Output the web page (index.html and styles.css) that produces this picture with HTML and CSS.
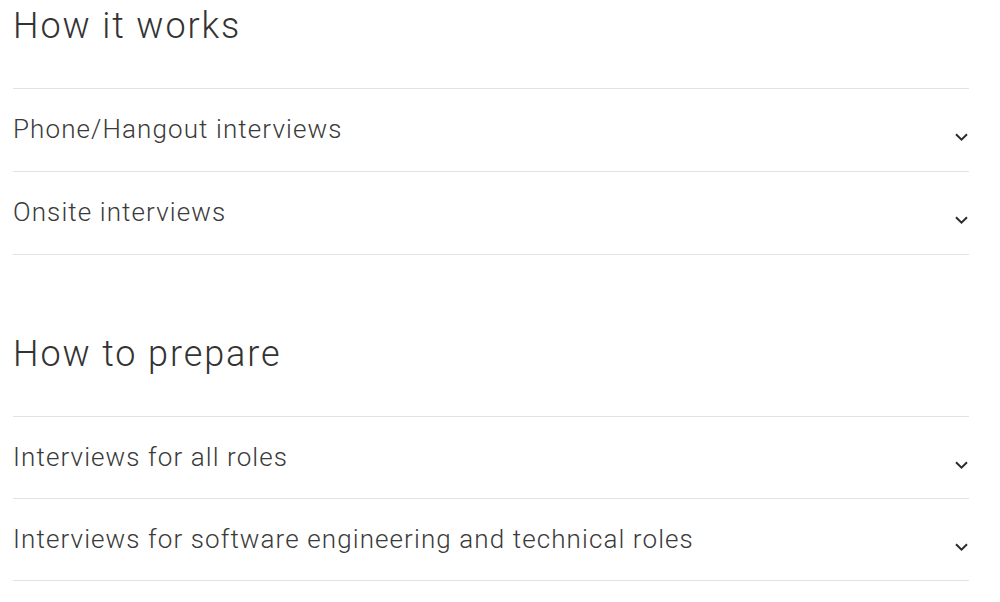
FILE: index.html
```html
<!DOCTYPE html>
<html lang="en">
<head>
<meta charset="utf-8">
<title>How it works</title>
<link rel="stylesheet" href="styles.css">
</head>
<body>
<main class="page">
  <section class="section">
    <h2 class="section-title">How it works</h2>
    <ul class="accordion">
      <li class="accordion-item">
        <span class="accordion-label">Phone/Hangout interviews</span>
        <svg class="chevron" viewBox="0 0 13 8" aria-hidden="true"><path d="M1 1.2l5.5 5.4 5.5-5.4"/></svg>
      </li>
      <li class="accordion-item">
        <span class="accordion-label">Onsite interviews</span>
        <svg class="chevron" viewBox="0 0 13 8" aria-hidden="true"><path d="M1 1.2l5.5 5.4 5.5-5.4"/></svg>
      </li>
    </ul>
  </section>
  <section class="section section-next">
    <h2 class="section-title">How to prepare</h2>
    <ul class="accordion">
      <li class="accordion-item">
        <span class="accordion-label">Interviews for all roles</span>
        <svg class="chevron" viewBox="0 0 13 8" aria-hidden="true"><path d="M1 1.2l5.5 5.4 5.5-5.4"/></svg>
      </li>
      <li class="accordion-item">
        <span class="accordion-label">Interviews for software engineering and technical roles</span>
        <svg class="chevron" viewBox="0 0 13 8" aria-hidden="true"><path d="M1 1.2l5.5 5.4 5.5-5.4"/></svg>
      </li>
    </ul>
  </section>
</main>
</body>
</html>
```
FILE: styles.css
```css
html, body {
  margin: 0;
  padding: 0;
  background: #ffffff;
}
body {
  font-family: Roboto, "Noto Sans", sans-serif;
  color: #333333;
}
.page {
  width: 956px;
  padding: 2px 0 0 13px;
}
.section-title {
  margin: 0 0 38px;
  font-size: 36px;
  font-weight: 300;
  line-height: 48px;
  letter-spacing: 1.9px;
  color: #333333;
}
.section-next {
  margin-top: 75px;
}
.accordion {
  list-style: none;
  margin: 0;
  padding: 0;
  border-top: 1px solid #e2e2e2;
}
.accordion-item {
  display: flex;
  align-items: flex-start;
  justify-content: space-between;
  padding: 24px 0 26px;
  border-bottom: 1px solid #e2e2e2;
}
.section-next .accordion-item {
  padding-bottom: 25px;
}
.accordion-label {
  font-size: 26px;
  font-weight: 300;
  line-height: 32px;
  letter-spacing: 1.1px;
  color: #3a3a3a;
}
.chevron {
  width: 13px;
  height: 8px;
  margin: 20px 1px 0 0;
  fill: none;
  stroke: #2b2b2b;
  stroke-width: 2;
  flex: none;
}
```
